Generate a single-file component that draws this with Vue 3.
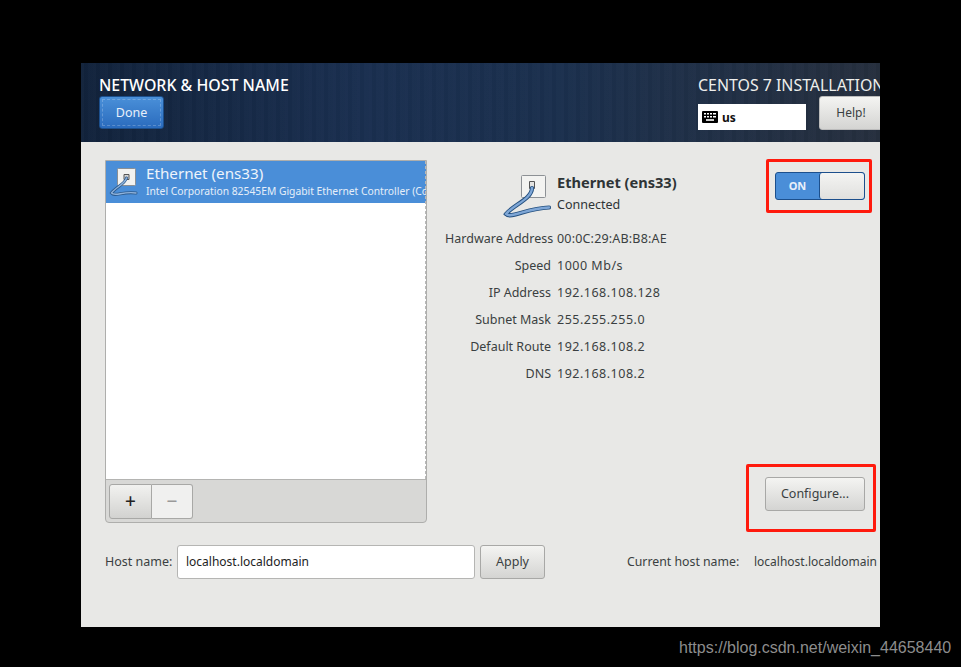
<script setup>
const rows = [
  { label: 'Hardware Address', value: '00:0C:29:AB:B8:AE', mac: true },
  { label: 'Speed', value: '1000 Mb/s' },
  { label: 'IP Address', value: '192.168.108.128' },
  { label: 'Subnet Mask', value: '255.255.255.0' },
  { label: 'Default Route', value: '192.168.108.2' },
  { label: 'DNS', value: '192.168.108.2' },
]
</script>

<template>
  <div class="page">
    <div class="window">
      <header class="top">
        <div class="top-left">
          <h1>NETWORK &amp; HOST NAME</h1>
          <button class="done"><span>Done</span></button>
        </div>
        <div class="top-right">
          <div class="product">CENTOS 7 INSTALLATION</div>
          <div class="top-controls">
            <div class="kbd">
              <svg width="16" height="12" viewBox="0 0 16 12">
                <rect width="16" height="12" rx="1" fill="#000" />
                <g fill="#fff">
                  <rect x="2" y="2" width="2" height="1.5" /><rect x="5" y="2" width="2" height="1.5" /><rect x="8" y="2" width="2" height="1.5" /><rect x="11" y="2" width="3" height="1.5" />
                  <rect x="2" y="5" width="2" height="1.5" /><rect x="5" y="5" width="2" height="1.5" /><rect x="8" y="5" width="2" height="1.5" /><rect x="11" y="5" width="3" height="1.5" />
                  <rect x="4" y="8.2" width="8" height="1.6" />
                </g>
              </svg>
              <span>us</span>
            </div>
            <button class="btn help">Help!</button>
          </div>
        </div>
      </header>

      <main class="body">
        <div class="columns">
          <section class="panel">
            <div class="list">
              <div class="item">
                <svg class="item-icon" width="30" height="32" viewBox="0 0 30 32">
                  <rect x="8.500" y="1.500" width="18" height="17" rx="1" fill="#f2f2f0" stroke="#8a8f94" />
                  <path d="M15 7.500h5v5h-5z" fill="#d8d8d6" stroke="#555" />
                  <path d="M17.500 11 C16 17 7 20 2.500 26 C6 30 14 24 27 26" fill="none" stroke="#2c5a8c" stroke-width="3" stroke-linecap="round" />
                  <path d="M17.500 11 C16 17 7 20 2.500 26 C6 30 14 24 27 26" fill="none" stroke="#8fb3dc" stroke-width="1.400" stroke-linecap="round" />
                </svg>
                <div class="item-text">
                  <div class="item-title">Ethernet (ens33)</div>
                  <div class="item-sub">Intel Corporation 82545EM Gigabit Ethernet Controller (Copper)</div>
                </div>
              </div>
            </div>
            <div class="toolbar">
              <div class="addremove">
                <button class="add">+</button>
                <button class="remove">−</button>
              </div>
            </div>
          </section>

          <section class="detail">
            <div class="detail-top">
              <div class="head">
                <svg class="head-icon" width="48" height="46" viewBox="0 0 48 46">
                  <rect x="18.500" y="0.500" width="24" height="22" rx="1" fill="#f3f3f1" stroke="#8d9195" />
                  <path d="M26.500 6.500h5v7h-5z" fill="#e4e4e2" stroke="#555" />
                  <path d="M29 13 C29 24 10 30 3 39 C8 44 24 33 46 32.500" fill="none" stroke="#24507f" stroke-width="4.200" stroke-linecap="round" />
                  <path d="M29 13 C29 24 10 30 3 39 C8 44 24 33 46 32.500" fill="none" stroke="#7ea6d6" stroke-width="2.400" stroke-linecap="round" />
                </svg>
                <div class="head-text">
                  <div class="head-title">Ethernet (ens33)</div>
                  <div class="head-sub">Connected</div>
                </div>
              </div>
              <div class="toggle">
                <span class="toggle-on">ON</span>
                <span class="toggle-knob"></span>
              </div>
            </div>
            <dl class="props">
              <template v-for="r in rows" :key="r.label">
                <dt>{{ r.label }}</dt>
                <dd :class="{ mac: r.mac }">{{ r.value }}</dd>
              </template>
            </dl>
            <div class="configure-row">
              <button class="btn configure">Configure...</button>
            </div>
          </section>
        </div>

        <footer class="hostrow">
          <label>Host name:</label>
          <div class="input">localhost.localdomain</div>
          <button class="btn apply">Apply</button>
          <span class="cur-label">Current host name:</span>
          <span class="cur-value">localhost.localdomain</span>
        </footer>

        <div class="mark mark-toggle"></div>
        <div class="mark mark-configure"></div>
      </main>
    </div>
    <div class="watermark">https://blog.csdn.net/weixin_44658440</div>
  </div>
</template>

<style>
html, body { margin: 0; background: #000; }
</style>

<style scoped>
.page {
  position: relative;
  width: 961px;
  height: 667px;
  background: #000;
  overflow: hidden;
  padding: 63px 0 0 81px;
  box-sizing: border-box;
  font-family: "Noto Sans", "Open Sans", sans-serif;
  font-size: 12.500px;
  color: #2e3436;
}
.window {
  width: 799px;
  height: 564px;
  background: #e8e8e6;
  overflow: hidden;
  display: flex;
  flex-direction: column;
}
button { font-family: inherit; margin: 0; padding: 0; }

.top {
  height: 79px;
  flex: none;
  display: flex;
  justify-content: space-between;
  background:
    repeating-linear-gradient(90deg, rgba(255,255,255,.012) 0 3px, rgba(0,0,0,.03) 3px 7px, rgba(255,255,255,.008) 7px 12px),
    linear-gradient(90deg, #12233c 0%, #1a2f50 35%, #1b304e 60%, #262f3e 100%);
}
.top-left { padding: 12px 0 0 18px; }
h1 {
  margin: 0;
  font-size: 15.900px;
  line-height: 21px;
  font-weight: 500;
  color: #fff;
  white-space: nowrap;
}
.done {
  display: block;
  width: 65px;
  height: 33px;
  border: 1px solid #1c4f8c;
  border-radius: 3px;
  background: linear-gradient(#4a90d9, #2a6bbd);
  color: #e8f0fa;
  font-size: 12.500px;
  padding: 2px;
}
.done span {
  display: flex;
  align-items: center;
  justify-content: center;
  height: 100%;
  padding-bottom: 1px;
  border: 1px dashed rgba(255,255,255,.22);
  box-sizing: border-box;
}
.top-right { width: 182px; flex: none; padding: 12px 0 0 0; overflow: hidden; }
.product {
  color: #eeeeec;
  font-size: 15.900px;
  line-height: 21px;
  white-space: nowrap;
}
.top-controls { display: flex; align-items: flex-start; gap: 13px; }
.kbd {
  width: 108px;
  height: 26px;
  margin-top: 8px;
  background: #fff;
  display: flex;
  align-items: center;
  gap: 4px;
  padding-left: 4px;
  box-sizing: border-box;
  font-weight: 700;
  font-size: 12px;
  color: #111;
  flex: none;
}
.btn {
  border: 1px solid #a8a8a6;
  border-radius: 3px;
  background: linear-gradient(#f4f4f2, #d4d4d2);
  color: #3a3f41;
  font-size: 12.500px;
  box-sizing: border-box;
  padding-bottom: 2px;
}
.help { width: 64px; height: 34px; flex: none; border-color: #bbb; font-size: 12px; }

.body { position: relative; flex: 1; padding: 18px 0 0 24px; display: flex; flex-direction: column; }
.columns { display: flex; height: 363px; }
.panel {
  width: 322px;
  flex: none;
  box-sizing: border-box;
  border: 1px solid #aeaeac;
  border-radius: 0 0 4px 4px;
  display: flex;
  flex-direction: column;
  background: #d8d8d6;
}
.list {
  flex: 1;
  background: #fff;
  border-bottom: 1px solid #b4b4b2;
  overflow: hidden;
  position: relative;
}
.list::after {
  content: "";
  position: absolute;
  top: 0;
  bottom: 0;
  right: 0;
  border-right: 1px dashed #b9b9b9;
}
.item {
  height: 42px;
  background: #4a8ed8;
  color: #fff;
  display: flex;
  align-items: center;
  padding-left: 3px;
  white-space: nowrap;
}
.item-icon { flex: none; margin-right: 7px; margin-top: 1px; }
.item-text { margin-top: 0; }
.item-title { font-size: 15.200px; line-height: 19px; color: #eef4fb; margin-top: -2px; }
.item-sub { font-size: 10.300px; line-height: 15px; color: #e6eef8; margin-top: 1px; }
.toolbar { height: 42px; flex: none; padding: 4px 0 0 3px; box-sizing: border-box; }
.addremove { display: flex; height: 35px; }
.add, .remove {
  width: 43px;
  height: 35px;
  border: 1px solid #a8a8a6;
  font-size: 19px;
  line-height: 1;
  box-sizing: border-box;
}
.add {
  border-radius: 3px 0 0 3px;
  background: linear-gradient(#f2f2f0, #d2d2d0);
  color: #222;
  font-weight: 500;
}
.remove {
  width: 41px;
  border-left: 0;
  border-radius: 0 3px 3px 0;
  background: #f0f0ef;
  color: #999;
  font-weight: 500;
}

.detail { flex: 1; position: relative; display: flex; flex-direction: column; }
.detail-top {
  display: flex;
  justify-content: space-between;
  padding: 12px 15px 0 76px;
  height: 46px;
}
.head { display: flex; }
.head-icon { flex: none; margin: 3px 6px 0 0; }
.head-title { font-weight: 700; font-size: 14.600px; line-height: 20px; white-space: nowrap; }
.head-sub { font-size: 12.500px; line-height: 20px; margin-top: 3px; }
.toggle {
  width: 90px;
  height: 28px;
  box-sizing: border-box;
  border: 1px solid #1c4f8c;
  border-radius: 3px;
  background: #4a8ed8;
  display: flex;
  align-items: stretch;
}
.toggle-on {
  width: 43px;
  text-align: center;
  line-height: 25px;
  color: #e8f0fa;
  font-size: 11px;
  font-weight: 700;
}
.toggle-knob {
  flex: 1;
  background: linear-gradient(#f4f4f2, #e0e0de);
  border-left: 1px solid #1c4f8c;
  border-radius: 3px;
}
.props {
  margin: 7px 0 0 18px;
  display: grid;
  grid-template-columns: 106px auto;
  column-gap: 6px;
  grid-auto-rows: 27px;
  align-items: center;
  justify-content: start;
  white-space: nowrap;
}
dt { text-align: right; color: #3a3f41; }
dd { margin: 0; color: #3a3f41; letter-spacing: .5px; }
dd.mac { letter-spacing: .18px; }
.configure-row {
  position: absolute;
  right: 15px;
  top: 317px;
}
.configure { width: 100px; height: 34px; }

.hostrow { display: flex; align-items: center; height: 34px; margin-top: 22px; white-space: nowrap; }
.hostrow label { width: 72px; flex: none; padding-bottom: 2px; color: #3a3f41; }
.input {
  width: 298px;
  height: 34px;
  flex: none;
  box-sizing: border-box;
  background: #fff;
  border: 1px solid #b5b5b3;
  border-radius: 3px;
  padding-left: 8px;
  line-height: 31px;
  color: #222;
  font-size: 12px;
}
.apply { width: 65px; height: 34px; flex: none; margin-left: 5px; }
.cur-label { margin-left: 82px; width: 127px; flex: none; padding-bottom: 2px; font-size: 12.300px; color: #3a3f41; }
.cur-value { color: #3a3f41; font-size: 12px; padding-bottom: 2px; }

.mark { position: absolute; border: 3px solid #ff1a0d; border-radius: 2px; box-sizing: border-box; }
.mark-toggle { left: 685px; top: 17px; width: 106px; height: 54px; }
.mark-configure { left: 665px; top: 322px; width: 130px; height: 68px; }

.watermark {
  position: absolute;
  left: 679px;
  top: 638px;
  font-family: "Liberation Sans", Arial, sans-serif;
  font-size: 16px;
  line-height: 20px;
  color: #8d8d8d;
  white-space: nowrap;
}
</style>
